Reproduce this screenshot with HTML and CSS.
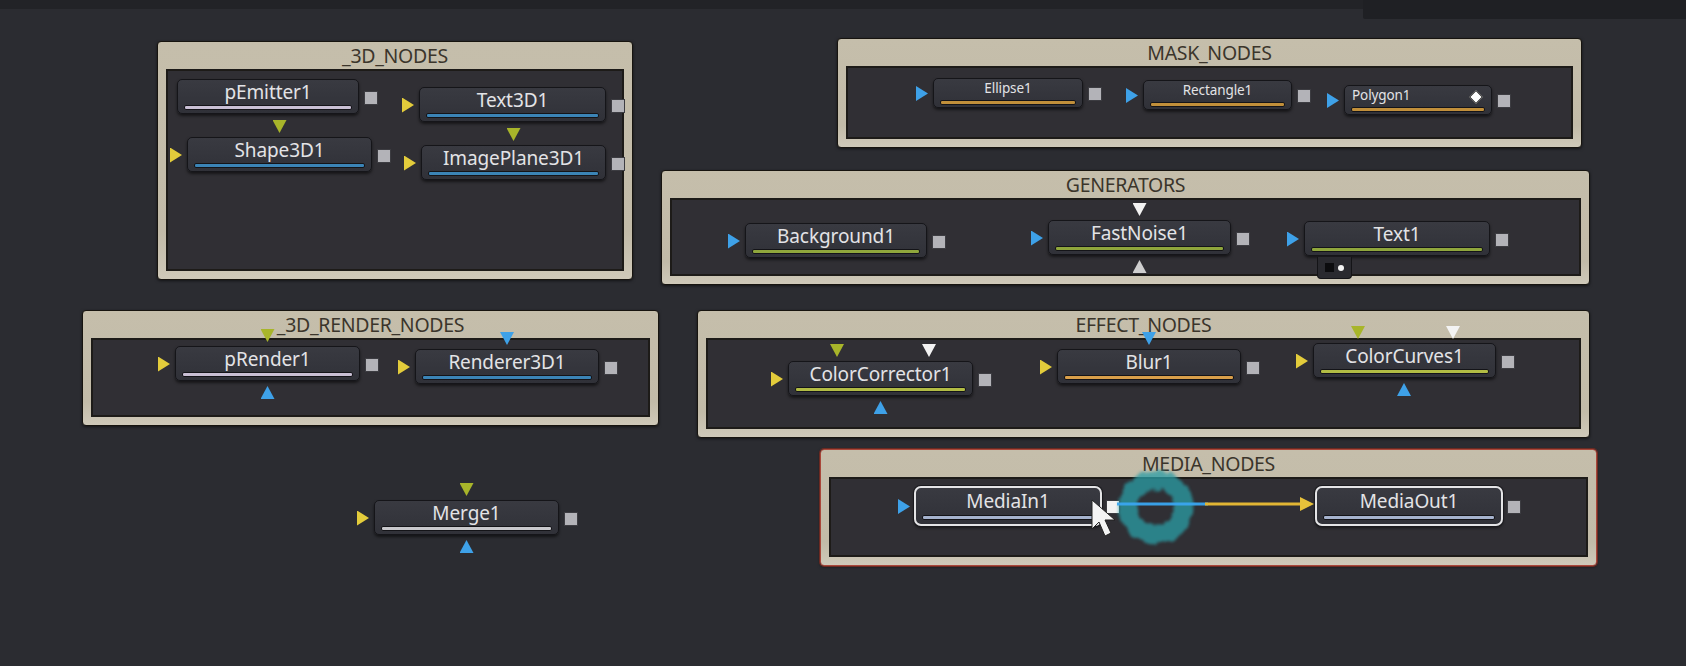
FILE: index.html
```html
<!DOCTYPE html>
<html>
<head>
<meta charset="utf-8">
<link rel="stylesheet" href="styles.css">
</head>
<body>
<div class="canvas">
  <div class="topbar"></div>
  <div class="corner-panel"></div>

  <section class="group g-3d">
    <div class="group-title">_3D_NODES</div>
    <div class="group-inner">
      <div class="node n-pemitter"><span class="label">pEmitter1</span><i class="bar lav"></i><i class="out"></i></div>
      <div class="node n-shape"><i class="in yellow"></i><i class="tp yg"></i><span class="label">Shape3D1</span><i class="bar blue"></i><i class="out"></i></div>
      <div class="node n-text3d"><i class="in yellow"></i><span class="label">Text3D1</span><i class="bar blue"></i><i class="out"></i></div>
      <div class="node n-image"><i class="in yellow"></i><i class="tp yg"></i><span class="label">ImagePlane3D1</span><i class="bar blue"></i><i class="out"></i></div>
    </div>
  </section>

  <section class="group g-mask">
    <div class="group-title">MASK_NODES</div>
    <div class="group-inner">
      <div class="node small n-ellipse"><i class="in blue"></i><span class="label">Ellipse1</span><i class="bar amber"></i><i class="out"></i></div>
      <div class="node small n-rect"><i class="in blue"></i><span class="label">Rectangle1</span><i class="bar amber"></i><i class="out"></i></div>
      <div class="node small n-poly"><i class="in blue"></i><span class="label left">Polygon1</span><i class="diamond"></i><i class="bar amber"></i><i class="out"></i></div>
    </div>
  </section>

  <section class="group g-gen">
    <div class="group-title">GENERATORS</div>
    <div class="group-inner">
      <div class="node n-bg"><i class="in blue"></i><span class="label">Background1</span><i class="bar green"></i><i class="out"></i></div>
      <div class="node n-noise"><i class="in blue"></i><i class="tp white"></i><span class="label">FastNoise1</span><i class="bar green"></i><i class="out"></i><i class="bp pale"></i></div>
      <div class="node n-text1"><i class="in blue"></i><span class="label">Text1</span><i class="bar green"></i><i class="out"></i>
        <span class="tab"><i class="tab-sq"></i><i class="tab-dot"></i></span>
      </div>
    </div>
  </section>

  <section class="group g-render">
    <div class="group-title">_3D_RENDER_NODES</div>
    <div class="group-inner">
      <div class="node n-prender"><i class="in yellow"></i><i class="tp yg"></i><span class="label">pRender1</span><i class="bar lav"></i><i class="out"></i><i class="bp blue"></i></div>
      <div class="node n-renderer"><i class="in yellow"></i><i class="tp blue"></i><span class="label">Renderer3D1</span><i class="bar blue"></i><i class="out"></i></div>
    </div>
  </section>

  <section class="group g-effect">
    <div class="group-title">EFFECT_NODES</div>
    <div class="group-inner">
      <div class="node n-cc"><i class="in yellow"></i><i class="tp yg cc-a"></i><i class="tp white cc-b"></i><span class="label">ColorCorrector1</span><i class="bar yg"></i><i class="out"></i><i class="bp blue"></i></div>
      <div class="node n-blur"><i class="in yellow"></i><i class="tp blue"></i><span class="label">Blur1</span><i class="bar orange"></i><i class="out"></i></div>
      <div class="node n-curves"><i class="in yellow"></i><i class="tp yg cv-a"></i><i class="tp white cv-b"></i><span class="label">ColorCurves1</span><i class="bar yg"></i><i class="out"></i><i class="bp blue cv-c"></i></div>
    </div>
  </section>

  <section class="group g-media">
    <div class="group-title">MEDIA_NODES</div>
    <div class="group-inner">
      <div class="node sel n-mediain"><i class="in blue"></i><span class="label">MediaIn1</span><i class="bar steel"></i><i class="out bright"></i></div>
      <div class="node sel n-mediaout"><span class="label">MediaOut1</span><i class="bar steel"></i><i class="out"></i></div>
    </div>
    <svg class="media-overlay" width="777" height="117" viewBox="0 0 777 117">
      <defs>
        <filter id="soft" filterUnits="userSpaceOnUse" x="280" y="0" width="120" height="117">
          <feTurbulence type="fractalNoise" baseFrequency="0.12" numOctaves="2" seed="4" result="n"/>
          <feDisplacementMap in="SourceGraphic" in2="n" scale="7" xChannelSelector="R" yChannelSelector="G" result="d"/>
          <feGaussianBlur in="d" stdDeviation="1.4"/>
        </filter>
      </defs>
      <ellipse cx="336" cy="58" rx="28" ry="27" fill="none" stroke="#2a9ea6" stroke-width="19" opacity="0.75" filter="url(#soft)"/>
      <line x1="297" y1="55" x2="388" y2="55" stroke="#3aa6f0" stroke-width="3" opacity="0.95"/>
      <line x1="385" y1="55" x2="482" y2="55" stroke="#e2b634" stroke-width="3"/>
      <polygon points="480,48 494,55 480,62" fill="#e8c23a"/>
      <path d="M272 51 L272 80 L279 73 L285 87 L291 84 L285 71 L295 71 Z" fill="#f4f4f4" stroke="#222" stroke-width="1"/>
    </svg>
  </section>

  <div class="node n-merge"><i class="in yellow"></i><i class="tp yg"></i><span class="label">Merge1</span><i class="bar grey"></i><i class="out"></i><i class="bp blue"></i></div>
</div>
</body>
</html>
```

FILE: styles.css
```css
html, body {
  margin: 0;
  padding: 0;
}
body {
  background: #2b2c31;
  font-family: "Noto Sans", "Open Sans", "DejaVu Sans", sans-serif;
  overflow: hidden;
}
.canvas {
  position: relative;
  width: 1686px;
  height: 666px;
  background: #2b2c31;
}
.topbar {
  height: 9px;
  background: #222327;
}
.corner-panel {
  position: absolute;
  left: 1363px;
  top: 0;
  width: 323px;
  height: 19px;
  background: #1f2024;
  border-bottom-left-radius: 2px;
}

/* groups */
.group {
  position: absolute;
  box-sizing: border-box;
  display: flex;
  flex-direction: column;
  padding: 0 8px 8px;
  background: linear-gradient(#c5beab, #c2bba8 80%, #cfc9b9);
  border: 1px solid #17140f;
  border-radius: 4px;
  box-shadow: 0 1px 3px rgba(0, 0, 0, 0.55);
}
.group-title {
  flex: none;
  height: 27px;
  line-height: 28px;
  text-align: center;
  font-size: 19.5px;
  color: #3b352b;
  letter-spacing: -0.3px;
}
.group-inner {
  flex: 1;
  position: relative;
  background: #302f34;
  box-shadow: inset 0 0 0 2px #1d1b18;
}
.g-3d { left: 157px; top: 41px; width: 476px; height: 239px; }
.g-mask { left: 837px; top: 38px; width: 745px; height: 110px; }
.g-gen { left: 661px; top: 170px; width: 929px; height: 115px; }
.g-render { left: 82px; top: 310px; width: 577px; height: 116px; }
.g-effect { left: 697px; top: 310px; width: 893px; height: 128px; }
.g-media {
  left: 820px; top: 449px; width: 777px; height: 117px;
  border-color: #a9473a;
  box-shadow: 0 0 0 1px #6b2a22, 0 1px 3px rgba(0, 0, 0, 0.55);
}
.media-overlay {
  position: absolute;
  left: -1px;
  top: -1px;
  overflow: visible;
  pointer-events: none;
}

/* nodes */
.node {
  position: absolute;
  box-sizing: border-box;
  height: 35px;
  display: flex;
  flex-direction: column;
  align-items: stretch;
  background: linear-gradient(#393a41, #303138);
  border: 1px solid #151519;
  border-radius: 5px;
  box-shadow: 0 2px 3px rgba(0, 0, 0, 0.55);
}
.label {
  display: block;
  margin-top: 1px;
  height: 22px;
  line-height: 22px;
  font-size: 19px;
  text-align: center;
  color: #e3e3e6;
  white-space: nowrap;
  letter-spacing: -0.1px;
}
.bar {
  display: block;
  height: 3px;
  margin: 2px 6px 0;
  border: 1px solid #141418;
  border-radius: 2px;
}
.bar.lav { background: #c9bfd4; }
.bar.blue { background: #3b84b6; }
.bar.amber { background: #c18f3a; }
.bar.green { background: #8fa63c; }
.bar.yg { background: #b2bc44; }
.bar.orange { background: #d99f4a; }
.bar.grey { background: #c8c8cc; }
.bar.steel { background: #a5b2cd; }

.node.small { height: 30px; }
.node.small .label {
  font-size: 13.5px;
  height: 17px;
  line-height: 17px;
  margin-top: 1px;
}
.node.small .label.left {
  text-align: left;
  padding-left: 7px;
}
.node.small .bar { margin-top: 3px; }

.node.sel {
  height: 40px;
  border: 2px solid #e4e4e6;
  border-radius: 7px;
  box-shadow: 0 0 0 1px #1a1a1e, 0 2px 3px rgba(0, 0, 0, 0.55);
}
.node.sel .label { margin-top: 2px; height: 22px; line-height: 22px; }
.node.sel .bar { margin-top: 3px; }

/* ports */
.in, .out, .tp, .bp, .diamond { position: absolute; display: block; }
.in {
  left: -18px;
  top: 50%;
  margin-top: -7px;
  width: 12px;
  height: 15px;
  clip-path: polygon(0 0, 100% 50%, 0 100%);
}
.tp {
  top: -18px;
  left: 50%;
  margin-left: -7px;
  width: 14px;
  height: 13px;
  clip-path: polygon(0 0, 100% 0, 50% 100%);
}
.bp {
  bottom: -19px;
  left: 50%;
  margin-left: -7px;
  width: 14px;
  height: 13px;
  clip-path: polygon(50% 0, 100% 100%, 0 100%);
}
.yellow { background: #e3cc3b; }
.blue { background: #3ea1e8; }
.yg { background: #a8b52a; }
.white { background: #f3f3f3; }
.pale { background: #cfcfcf; }
.out {
  right: -20px;
  top: 50%;
  margin-top: -6px;
  width: 14px;
  height: 14px;
  box-sizing: border-box;
  background: #b3b3b8;
  border: 1px solid #3c3c41;
}
.out.bright { background: #f2f2f2; }
.diamond {
  right: 10px;
  top: 6px;
  width: 8px;
  height: 8px;
  background: #fff;
  border: 1px solid #222;
  transform: rotate(45deg);
}
.tab {
  position: absolute;
  left: 12px;
  top: 35px;
  width: 35px;
  height: 22px;
  box-sizing: border-box;
  background: #2a2a2f;
  border: 1px solid #141417;
  border-top: none;
  border-radius: 0 0 4px 4px;
  display: flex;
  align-items: center;
  gap: 4px;
  padding-left: 7px;
}
.tab-sq { display: block; width: 9px; height: 9px; background: #0c0c0e; }
.tab-dot { display: block; width: 6px; height: 6px; border-radius: 50%; background: #f4f4f4; }

/* node placement (inner-area coordinates) */
.n-pemitter { left: 11px; top: 10px; width: 182px; }
.n-shape { left: 21px; top: 68px; width: 185px; }
.n-text3d { left: 253px; top: 18px; width: 187px; }
.n-image { left: 255px; top: 76px; width: 185px; }

.n-ellipse { left: 87px; top: 12px; width: 150px; }
.n-rect { left: 297px; top: 14px; width: 149px; }
.n-poly { left: 498px; top: 19px; width: 148px; }

.n-bg { left: 75px; top: 25px; width: 182px; }
.n-noise { left: 378px; top: 22px; width: 183px; }
.n-text1 { left: 634px; top: 23px; width: 186px; }

.n-prender { left: 84px; top: 8px; width: 185px; }
.n-renderer { left: 324px; top: 11px; width: 184px; }

.n-cc { left: 82px; top: 23px; width: 185px; }
.n-blur { left: 351px; top: 11px; width: 184px; }
.n-curves { left: 607px; top: 5px; width: 183px; }
.cc-a { left: 48px; }
.cc-b { left: 140px; }
.cv-a { left: 44px; }
.cv-b { left: 139px; }
.cv-c { left: 90px; }

.n-mediain { left: 85px; top: 9px; width: 188px; }
.n-mediaout { left: 486px; top: 9px; width: 188px; }

.n-merge { left: 374px; top: 500px; width: 185px; }
```
